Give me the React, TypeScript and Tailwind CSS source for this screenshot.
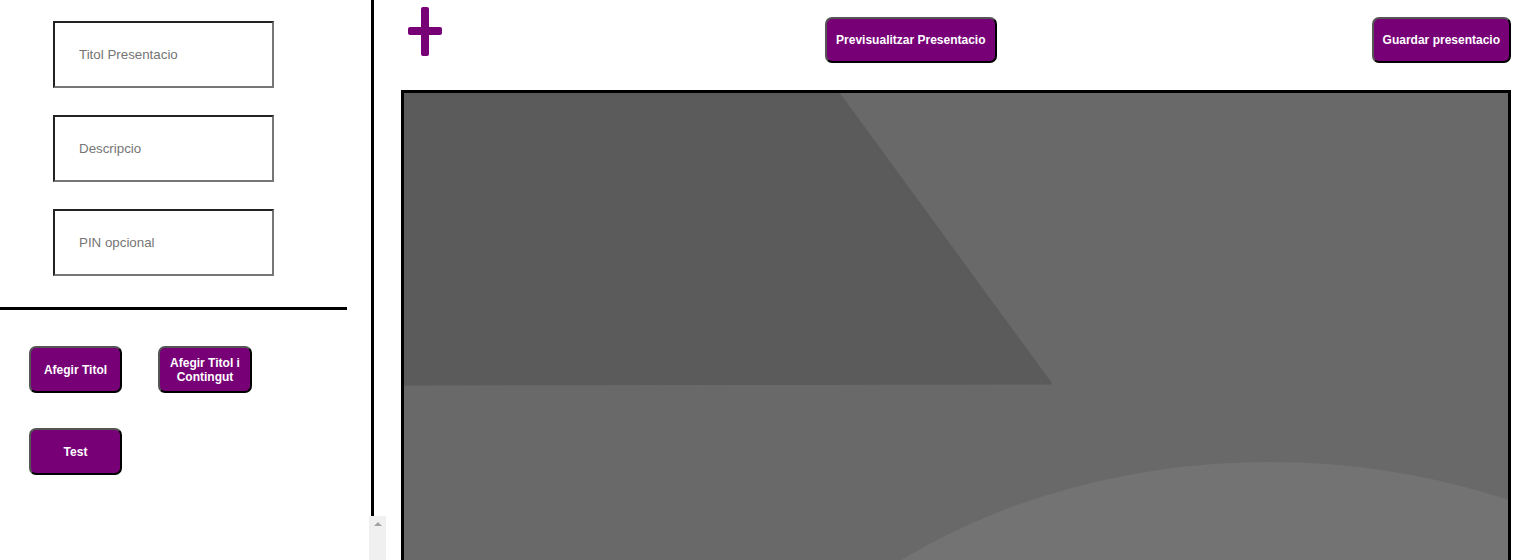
import React from "react";

const inputs = ["Titol Presentacio", "Descripcio", "PIN opcional"];

const btn =
  "bg-[#770077] text-white font-bold text-[12px] leading-[14px] rounded-[7px] border-2 border-t-[#555555] border-l-[#555555] border-r-black border-b-black";

const PlusIcon = () => (
  <svg width="34" height="49" viewBox="0 0 34 49" className="block">
    <rect x="13" y="0" width="8" height="49" rx="2" fill="#770077" />
    <rect x="0" y="20" width="34" height="8" rx="2" fill="#770077" />
  </svg>
);

const SideBar = () => {
  return (
    <div className="flex flex-col w-[386px] shrink-0 h-[560px]">
      <div className="w-[374px] h-[516px] shrink-0 border-r-[3px] border-black flex flex-col">
        <div className="flex flex-col gap-[27px] pt-[21px] pl-[53px]">
          {inputs.map((label) => (
            <input
              key={label}
              placeholder={label}
              className="w-[221px] h-[67px] pl-[24px] text-[13.33px] placeholder:text-[#757575] border-2 border-t-[#222222] border-l-[#222222] border-r-[#767676] border-b-[#767676] outline-none"
            />
          ))}
        </div>
        <div className="w-[347px] h-[3px] bg-black mt-[31px]" />
        <div className="flex flex-col gap-[35px] pl-[29px] pt-[36px]">
          <div className="flex gap-[36px]">
            <button className={`${btn} w-[93px] h-[47px]`}>Afegir Titol</button>
            <button className={`${btn} w-[94px] h-[47px]`}>
              Afegir Titol i Contingut
            </button>
          </div>
          <button className={`${btn} w-[93px] h-[47px]`}>Test</button>
        </div>
      </div>
      <div className="flex-1 flex pl-[369px]">
        <div className="w-[17px] bg-[#f0f0f0] flex justify-center pt-[6px]">
          <div className="w-0 h-0 border-l-[4px] border-r-[4px] border-b-[4px] border-l-transparent border-r-transparent border-b-[#a3a3a3]" />
        </div>
      </div>
    </div>
  );
};

const Slide = () => (
  <div className="shrink-0 border-[3px] border-black bg-[#696969] w-[1110px] h-[520px] overflow-hidden">
    <svg width="1104" height="514" className="block">
      <polygon
        points="0,0 434,0 646,290 0,291"
        fill="#5b5b5b"
        stroke="#5b5b5b"
        strokeWidth="3"
        strokeLinejoin="round"
      />
      <ellipse cx="866" cy="799" rx="580" ry="430" fill="#737373" />
    </svg>
  </div>
);

export default function App() {
  return (
    <div className="flex w-[1527px] h-[560px] overflow-hidden bg-white font-['Liberation_Sans',Arial,sans-serif]">
      <SideBar />
      <div className="flex flex-col pl-[15px]">
        <div className="shrink-0 h-[90px] w-[1110px] flex justify-between items-start">
          <div className="mt-[7px] ml-[7px]">
            <PlusIcon />
          </div>
          <button className={`${btn} mt-[17px] ml-[8px] h-[46px] px-[9px]`}>
            Previsualitzar Presentacio
          </button>
          <button className={`${btn} mt-[17px] h-[46px] px-[9px]`}>
            Guardar presentacio
          </button>
        </div>
        <Slide />
      </div>
    </div>
  );
}
